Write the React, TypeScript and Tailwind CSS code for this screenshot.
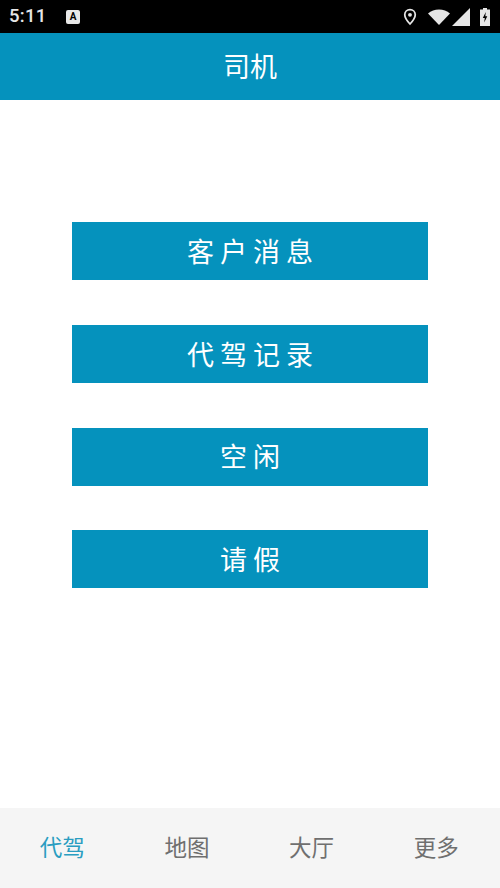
const cjk = { fontFamily: '"Noto Sans CJK SC", sans-serif' };

const actions = ['客户消息', '代驾记录', '空闲', '请假'];
const tabs = ['代驾', '地图', '大厅', '更多'];

function StatusBar() {
	return (
		<div className="flex h-[33px] items-center bg-black text-[#e6e6e6]">
			<span className="ml-[9px] w-[38px] font-['Roboto',sans-serif] text-[18.5px] leading-none font-medium tracking-[0.3px]">
				5:11
			</span>
			<div className="ml-[19px] flex h-[14px] w-[14px] items-center justify-center rounded-[2px] bg-[#e8e8e8] font-['Roboto',sans-serif] text-[10px] leading-none font-bold text-black">
				A
			</div>
			<div className="ml-auto flex items-center">
				<svg width="14" height="18" viewBox="0 0 16 20" className="mr-[11px]">
					<path
						d="M8 1.5C4.6 1.5 2 4.1 2 7.4 2 11.6 8 18 8 18s6-6.4 6-10.6C14 4.1 11.4 1.5 8 1.5z"
						fill="none"
						stroke="#e6e6e6"
						strokeWidth="2"
					/>
					<circle cx="8" cy="7.5" r="2.2" fill="#e6e6e6" />
				</svg>
				<svg width="22" height="16" viewBox="0 0 22 16" className="mr-[2px]">
					<path d="M0 4.5C3 1.8 6.8 0.5 11 0.5s8 1.3 11 4L11 16z" fill="#e6e6e6" />
				</svg>
				<svg width="18" height="18" viewBox="0 0 18 18" className="mr-[10px]">
					<path d="M18 0v18H0z" fill="#e6e6e6" />
				</svg>
				<svg width="10" height="18" viewBox="0 0 10 18" className="mr-[10px]">
					<path d="M3 0h4v1.500h3V18H0V1.500h3z" fill="#e6e6e6" />
					<path d="M5.800 4 2.800 10h2l-.6 4.500L7.300 8.300h-2z" fill="#000" />
				</svg>
			</div>
		</div>
	);
}

export default function App() {
	return (
		<div className="flex h-[888px] w-[500px] flex-col bg-white" style={cjk}>
			<StatusBar />

			<div className="flex h-[67px] items-center justify-center bg-[#0592bd] text-[27px] text-white">
				司机
			</div>

			<div className="flex flex-1 flex-col gap-[44.800px] px-[72px] pt-[122px]">
				{actions.map((label) => (
					<button
						key={label}
						className="flex h-[58px] items-center justify-center bg-[#0592bd] pl-[6px] text-[27px] tracking-[6px] text-white"
					>
						{label}
					</button>
				))}
			</div>

			<div className="flex h-[80px] items-center bg-[#f5f5f5] pb-[2px] pr-[1.500px]">
				{tabs.map((tab, i) => (
					<div
						key={tab}
						className={
							i === 0
								? 'flex-1 text-center text-[22.500px] text-[#2a9dc1]'
								: 'flex-1 text-center text-[22.500px] text-[#6f6f6f]'
						}
					>
						{tab}
					</div>
				))}
			</div>
		</div>
	);
}
